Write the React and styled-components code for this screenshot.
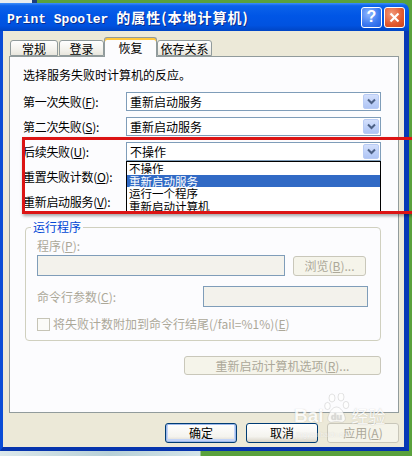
import styled, { createGlobalStyle } from "styled-components"

const GlobalStyle = createGlobalStyle`
* {
    box-sizing: border-box;
}
html, body {
    margin: 0;
    padding: 0;
    background-color: #5aa13c;
}
body {
    font-family: "Noto Sans CJK SC", "Noto Sans", sans-serif;
    font-size: 12px;
    color: #000;
}
`

const Page = styled.div`
    position: relative;
    width: 412px;
    height: 456px;
    overflow: hidden;
    padding-top: 3px;
    background:
        linear-gradient(to right, #e6ecef 0 32px, #1d3f7c 32px 37px, #5aa13c 37px) top / 100% 3px no-repeat,
        linear-gradient(to right, #dce8eb 0, #b7d0d7 110px, #d3e4e8 200px, #5aa13c 201px) bottom / 100% 5px no-repeat,
        #5aa13c;
`

const Window = styled.div`
    width: 409px;
    height: 448px;
    display: flex;
    flex-direction: column;
    border-radius: 0 7px 0 0;
    overflow: hidden;
`

const TitleBar = styled.div`
    height: 28px;
    display: flex;
    align-items: center;
    padding: 0 4px 0 7px;
    background: linear-gradient(#3d8ffb 0%, #0b62ea 10%, #0056e6 45%, #0052e0 80%, #0045c4 100%);
`

const Title = styled.div`
    color: #fff;
    font-weight: bold;
    white-space: nowrap;
    text-shadow: 1px 1px 0 #0c2d8c;
`

const TitleLatin = styled.span`
    font-family: "Liberation Mono", monospace;
    font-size: 13px;
    white-space: pre;
`

const TitleCjk = styled.span`
    font-family: "Noto Sans CJK SC", sans-serif;
    font-size: 14px;
    letter-spacing: 1px;
`

const Controls = styled.div`
    margin-left: auto;
    display: flex;
    gap: 2px;
`

const CaptionButton = styled.div`
    width: 21px;
    height: 21px;
    border: 1px solid #fff;
    border-radius: 3px;
    display: flex;
    align-items: center;
    justify-content: center;
    color: #fff;
    font-family: "Liberation Sans", sans-serif;
    font-weight: bold;
    font-size: 16px;
    background: ${p => p.$close
        ? "radial-gradient(circle at 35% 30%, #f29a7c, #e2582e 60%, #c9441c)"
        : "radial-gradient(circle at 35% 30%, #8fb7ff, #3b79f0 60%, #1f5ee0)"};
`

const Body = styled.div`
    flex: 1;
    display: flex;
    flex-direction: column;
    background: #ece9d8;
    border-left: 3px solid #0a4cd6;
    border-right: 5px solid #0738b6;
    border-bottom: 4px solid #0634ad;
    padding: 6px 5px 0 6px;
`

const TabRow = styled.div`
    height: 19px;
    display: flex;
    align-items: flex-end;
    padding-left: 1px;
`

const Tab = styled.div`
    position: relative;
    z-index: ${p => (p.$active ? 1 : 0)};
    width: ${p => p.$w}px;
    margin-left: ${p => p.$ml || 0}px;
    height: ${p => (p.$active ? 20 : 16)}px;
    margin-bottom: ${p => (p.$active ? -1 : 0)}px;
    border: 1px solid #919b9c;
    border-bottom: ${p => (p.$active ? "none" : "1px solid #919b9c")};
    border-radius: 3px 3px 0 0;
    background: ${p => (p.$active ? "#fcfcfe" : "linear-gradient(#ffffff, #f3f2ed 60%, #e8e6dd)")};
    box-shadow: ${p => (p.$active ? "inset 0 2px 0 #ffc83c, inset 0 1px 0 #e68b2c" : "none")};
    display: flex;
    align-items: center;
    justify-content: center;
    font-size: 12px;
    line-height: 14px;
    padding-top: ${p => (p.$active ? 0 : 1)}px;
`

const Panel = styled.div`
    position: relative;
    height: 357px;
    border: 1px solid #919b9c;
    background: #fcfcfe;
    padding: 11px 16px 0 13px;
    display: flex;
    flex-direction: column;
`

const Text = styled.div`
    line-height: 14px;
    white-space: nowrap;
    color: ${p => (p.$disabled ? "#aca899" : "#000")};
`

const Key = styled.span`
    text-decoration: underline;
`

const Rows = styled.div`
    margin-top: 10px;
    display: flex;
    flex-direction: column;
    gap: 6px;
`

const Row = styled.div`
    height: 19px;
    display: flex;
    align-items: center;
`

const Label = styled.div`
    width: 103px;
    line-height: 14px;
    white-space: nowrap;
    letter-spacing: -0.3px;
`

const ComboWrap = styled.div`
    position: relative;
    width: 255px;
    height: 19px;
`

const Combo = styled.div`
    height: 19px;
    border: 1px solid #7f9db9;
    background: #fff;
    display: flex;
    align-items: center;
    padding-left: 3px;
    line-height: 14px;
`

const ArrowButton = styled.div`
    margin: 0 1px 0 auto;
    width: 16px;
    height: 15px;
    border: 1px solid #b8cbf4;
    border-radius: 2px;
    background: linear-gradient(#d4e0fc, #bccff8 60%, #b0c5f4);
    display: flex;
    align-items: center;
    justify-content: center;
`

const DropList = styled.div`
    position: absolute;
    top: 100%;
    left: 0;
    width: 255px;
    border: 1px solid #000;
    background: #fff;
    z-index: 2;
`

const DropItem = styled.div`
    height: 12.5px;
    line-height: 12.5px;
    font-size: 11.5px;
    padding-left: 2px;
    white-space: nowrap;
    background: ${p => (p.$selected ? "#316ac5" : "transparent")};
    color: ${p => (p.$selected ? "#fff" : "#000")};
`

const GroupBox = styled.div`
    margin: 16px 1px 0 2px;
    border: 1px solid #d0d0bf;
    border-radius: 4px;
    padding: 0 12px 9px 11px;
    display: flex;
    flex-direction: column;
`

const Legend = styled.div`
    align-self: flex-start;
    margin: -8px 0 0 -6px;
    padding: 0 2px;
    background: #fcfcfe;
    color: #0046d5;
    line-height: 14px;
`

const InputRow = styled.div`
    margin-top: ${p => p.$mt}px;
    display: flex;
    align-items: center;
`

const Input = styled.div`
    width: ${p => p.$w}px;
    height: 21px;
    border: 1px solid #7f9db9;
    background: #f3f2ec;
`

const XpButton = styled.div`
    width: ${p => p.$w}px;
    height: ${p => p.$h || 20}px;
    margin-left: ${p => p.$ml || 0}px;
    border: 1px solid ${p => (p.$disabled ? "#c9c7ba" : "#003c74")};
    border-radius: 3px;
    background: ${p => (p.$disabled ? "#f5f4ea" : "linear-gradient(#ffffff, #f4f3ee 70%, #d8d3c6)")};
    box-shadow: ${p => (p.$default ? "inset 0 0 0 1px #9db9eb, inset 0 -1px 0 2px #c3d4f7" : "none")};
    color: ${p => (p.$disabled ? "#aca899" : "#000")};
    display: flex;
    align-items: center;
    justify-content: center;
    line-height: 14px;
    white-space: nowrap;
`

const CheckBox = styled.div`
    width: 13px;
    height: 13px;
    border: 1px solid #c6c4b6;
    background: #fbfbf8;
    margin-right: 3px;
`

const RightRow = styled.div`
    margin-top: ${p => p.$mt}px;
    display: flex;
    justify-content: flex-end;
    gap: ${p => p.$gap || 0}px;
    margin-right: ${p => p.$mr || 0}px;
`

const RedMark = styled.div`
    position: absolute;
    left: 22px;
    top: 137px;
    width: 400px;
    height: 77px;
    border: 3px solid #dc1414;
    box-shadow: 1px 2px 3px rgba(0, 0, 0, 0.35);
    pointer-events: none;
    z-index: 5;
`

const Watermark = styled.div`
    position: absolute;
    left: 294px;
    top: 393px;
    display: flex;
    align-items: flex-end;
    color: #fff;
    opacity: 0.8;
    text-shadow: 0 0 1px rgba(120, 120, 120, 0.5);
    z-index: 6;
    pointer-events: none;
`

const MarkLatin = styled.span`
    font-family: "Liberation Sans", sans-serif;
    font-weight: bold;
    font-size: 19px;
    line-height: 20px;
`

const MarkCjk = styled.span`
    font-size: 17px;
    line-height: 20px;
    margin-left: 1px;
`

const MarkSmall = styled.div`
    position: absolute;
    left: 2px;
    top: 38px;
    font-family: "Liberation Sans", sans-serif;
    font-size: 7px;
    opacity: 0.6;
    white-space: nowrap;
`

function Chevron() {
    return (
        <svg width="9" height="7" viewBox="0 0 9 7">
            <path d="M1 1.5 L4.5 5 L8 1.5" fill="none" stroke="#4d6185" strokeWidth="2" />
        </svg>
    )
}

function Paw() {
    return (
        <svg width="27" height="33" viewBox="0 0 27 33">
            <g fill="#fff" stroke="rgba(140,140,140,0.5)" strokeWidth="0.6">
                <ellipse cx="8" cy="5" rx="3" ry="4" />
                <ellipse cx="17" cy="4" rx="3" ry="4" />
                <ellipse cx="3.5" cy="13" rx="2.8" ry="3.6" />
                <ellipse cx="22" cy="12" rx="2.8" ry="3.6" />
                <path d="M12.5 14 C8 14 5 20 4 24 C3 28 6 30 9 29 C11 28.5 14 28.5 16 29 C19 30 22 28 21 24 C20 20 17 14 12.5 14 Z" />
            </g>
            <text x="12.5" y="27" textAnchor="middle" fontSize="9" fontFamily="Liberation Sans" fontWeight="bold" fill="#d8d8d8">du</text>
        </svg>
    )
}

function App() {
    return (
        <>
            <GlobalStyle />
            <Page>
                <Window>
                    <TitleBar>
                        <Title>
                            <TitleLatin>Print Spooler </TitleLatin>
                            <TitleCjk>的属性(本地计算机)</TitleCjk>
                        </Title>
                        <Controls>
                            <CaptionButton>?</CaptionButton>
                            <CaptionButton $close>
                                <svg width="11" height="11" viewBox="0 0 11 11">
                                    <path d="M1.5 1.5 L9.5 9.5 M9.5 1.5 L1.5 9.5" stroke="#fff" strokeWidth="2.2" />
                                </svg>
                            </CaptionButton>
                        </Controls>
                    </TitleBar>
                    <Body>
                        <TabRow>
                            <Tab $w={48}>常规</Tab>
                            <Tab $w={45} $ml={1}>登录</Tab>
                            <Tab $w={53} $active>恢复</Tab>
                            <Tab $w={55}>依存关系</Tab>
                        </TabRow>
                        <Panel>
                            <Text>选择服务失败时计算机的反应。</Text>
                            <Rows>
                                <Row>
                                    <Label>第一次失败(<Key>F</Key>):</Label>
                                    <ComboWrap>
                                        <Combo>重新启动服务<ArrowButton><Chevron /></ArrowButton></Combo>
                                    </ComboWrap>
                                </Row>
                                <Row>
                                    <Label>第二次失败(<Key>S</Key>):</Label>
                                    <ComboWrap>
                                        <Combo>重新启动服务<ArrowButton><Chevron /></ArrowButton></Combo>
                                    </ComboWrap>
                                </Row>
                                <Row>
                                    <Label>后续失败(<Key>U</Key>):</Label>
                                    <ComboWrap>
                                        <Combo>不操作<ArrowButton><Chevron /></ArrowButton></Combo>
                                        <DropList>
                                            <DropItem>不操作</DropItem>
                                            <DropItem $selected>重新启动服务</DropItem>
                                            <DropItem>运行一个程序</DropItem>
                                            <DropItem>重新启动计算机</DropItem>
                                        </DropList>
                                    </ComboWrap>
                                </Row>
                                <Row>
                                    <Label>重置失败计数(<Key>O</Key>):</Label>
                                </Row>
                                <Row>
                                    <Label>重新启动服务(<Key>V</Key>):</Label>
                                </Row>
                            </Rows>
                            <GroupBox>
                                <Legend>运行程序</Legend>
                                <InputRow $mt={5}>
                                    <Text $disabled>程序(<Key>P</Key>):</Text>
                                </InputRow>
                                <InputRow $mt={2}>
                                    <Input $w={248} />
                                    <XpButton $w={73} $ml={8} $disabled>浏览(<Key>B</Key>)...</XpButton>
                                </InputRow>
                                <InputRow $mt={10}>
                                    <Text $disabled style={{ flex: 1 }}>命令行参数(<Key>C</Key>):</Text>
                                    <Input $w={165} />
                                </InputRow>
                                <InputRow $mt={10}>
                                    <CheckBox />
                                    <Text $disabled>将失败计数附加到命令行结尾(/fail=%1%)(<Key>E</Key>)</Text>
                                </InputRow>
                            </GroupBox>
                            <RightRow $mt={15} $mr={1}>
                                <XpButton $w={197} $h={19} $disabled>重新启动计算机选项(<Key>R</Key>)...</XpButton>
                            </RightRow>
                        </Panel>
                        <RightRow $mt={10} $gap={9}>
                            <XpButton $w={72} $default>确定</XpButton>
                            <XpButton $w={72}>取消</XpButton>
                            <XpButton $w={72} $disabled>应用(<Key>A</Key>)</XpButton>
                        </RightRow>
                    </Body>
                </Window>
                <RedMark />
                <Watermark>
                    <MarkLatin>Bai</MarkLatin>
                    <Paw />
                    <MarkCjk>经验</MarkCjk>
                    <MarkSmall>jingyan.baidu.com</MarkSmall>
                </Watermark>
            </Page>
        </>
    )
}

export default App
